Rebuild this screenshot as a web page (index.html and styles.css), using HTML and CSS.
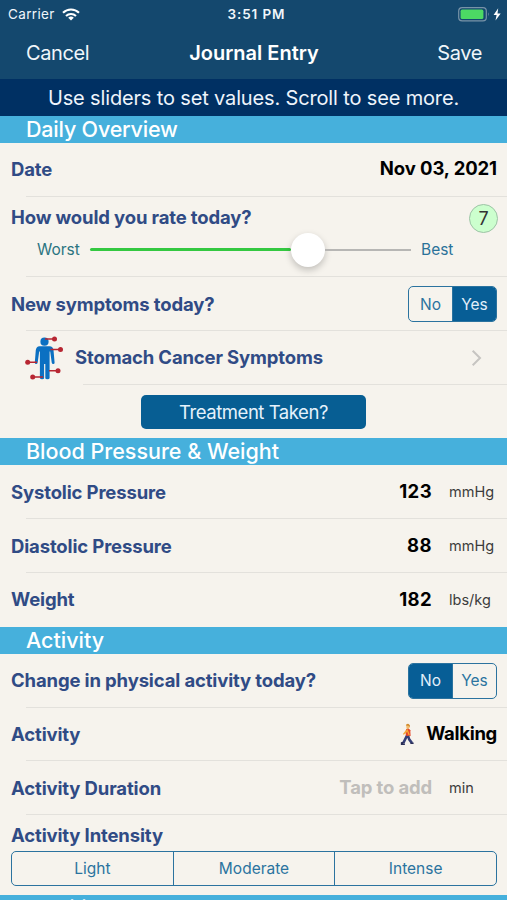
FILE: index.html
```html
<!DOCTYPE html>
<html lang="en">
<head>
<meta charset="utf-8">
<title>Journal Entry</title>
<link rel="stylesheet" href="styles.css">
</head>
<body>
<header class="top">
  <div class="status">
    <div class="carrier"><span class="t-carrier">Carrier</span>
      <svg class="wifi" viewBox="0 0 18 13" width="18" height="13"><g fill="none" stroke="#fff" stroke-width="2.1"><path d="M1 4.8a11.4 11.4 0 0 1 16 0"/><path d="M4 8a7.2 7.2 0 0 1 10 0"/></g><path d="M9 12.6 6.2 9.8a4 4 0 0 1 5.6 0z" fill="#fff"/></svg>
    </div>
    <div class="time">3:51 PM</div>
    <svg class="battery" viewBox="0 0 44 15" width="44" height="15"><rect x=".7" y=".7" width="27.6" height="13.2" rx="3.4" fill="none" stroke="#7893a8" stroke-width="1.2"/><rect x="2.6" y="2.6" width="22.8" height="9.4" rx="1.6" fill="#4cd964"/><path d="M30 5.2q1.8 2.1 0 4.2z" fill="#7893a8"/><path d="M40.2 1.2 35.6 8h3l-1.1 5.6 5.2-7.2h-3.2z" fill="#fff"/></svg>
  </div>
  <nav class="nav"><span class="t-cancel">Cancel</span><span class="title">Journal Entry</span><span class="t-save">Save</span></nav>
</header>
<div class="hint"><span>Use sliders to set values. Scroll to see more.</span></div>
<main>
  <h2 class="section daily">Daily Overview</h2>
  <div class="row line"><span class="label">Date</span><span class="value date">Nov 03, 2021</span></div>
  <div class="rate line">
    <div class="rate-head"><span class="label">How would you rate today?</span><span class="score">7</span></div>
    <div class="slider"><span class="worst">Worst</span><div class="track"><div class="fill"></div><div class="thumb"></div><div class="rest"></div></div><span class="best">Best</span></div>
  </div>
  <div class="row line"><span class="label">New symptoms today?</span><div class="seg"><span>No</span><span class="on">Yes</span></div></div>
  <div class="row line inset">
    <svg class="body" viewBox="0 0 40 46" width="40" height="46"><g fill="#0b70c2"><circle cx="19.5" cy="6.7" r="4.1"/><path d="M14.5 11.3h10q3.5 0 4 3.8l1.1 12.6q-.1 1.5-1.4 1.3-1.2 0-1.5-1.5l-1.5-11h-.6V43q0 1.2-2.2 1.2T20.3 43V29h-1.2v14q0 1.2-2 1.2T14.9 43V16.5h-.7l-1.5 11q-.3 1.5-1.6 1.5-1.3 0-1.3-1.5l1-12.4q.6-3.8 3.700-3.800z"/></g><g stroke="#b72632" stroke-width="1.5" fill="#b72632"><path d="M20 4h9M25.5 14.5h9M3 27.3h9M24 35.7h8.5M8 42h10"/><g stroke="none"><circle cx="29.5" cy="4" r="2.5"/><circle cx="35.5" cy="14.5" r="2.5"/><circle cx="2.7" cy="27.3" r="2.5"/><circle cx="33" cy="35.7" r="2.5"/><circle cx="7.7" cy="42" r="2.5"/></g></g></svg>
    <span class="label">Stomach Cancer Symptoms</span>
    <svg class="chev" viewBox="0 0 12 18" width="12" height="18"><path d="M1.7 1.7 9 9l-7.3 7.3" fill="none" stroke="#c6c4c1" stroke-width="2"/></svg>
  </div>
  <div class="action"><button class="treat">Treatment Taken?</button></div>
  <h2 class="section">Blood Pressure &amp; Weight</h2>
  <div class="row line"><span class="label">Systolic Pressure</span><span class="value num">123</span><span class="unit">mmHg</span></div>
  <div class="row line"><span class="label">Diastolic Pressure</span><span class="value num">88</span><span class="unit">mmHg</span></div>
  <div class="row"><span class="label">Weight</span><span class="value num">182</span><span class="unit">lbs/kg</span></div>
  <h2 class="section">Activity</h2>
  <div class="row line"><span class="label">Change in physical activity today?</span><div class="seg"><span class="on">No</span><span>Yes</span></div></div>
  <div class="row line"><span class="label">Activity</span>
    <svg class="walker" viewBox="0 0 16 24" width="15" height="23"><path d="M6.5 2.5Q7 .8 9 1.3q1.7.6 1.2 3l-1.2 2-2-.6z" fill="#f2bd70"/><path d="M6.200 2.500Q6.800.2 9.200.7q2 .6 1.300 3.600L9 2.700z" fill="#cf8a2e"/><path d="M6.600 6.200q3-1 4.400 1.200l.3 6.200-5 .5-.4-5z" fill="#e4482c"/><path d="m6.700 7-3.600 4.500 1 .8 4-3.500z" fill="#f3a83a"/><path d="M7.500 6.500 10 13" stroke="#f8ad35" stroke-width="1.3"/><path d="M7.300 13.500 3.500 21.200M8.600 13.500l1.200 3.700 3 4" stroke="#343e77" stroke-width="2.7" fill="none"/><path d="m3.700 20.500-2 .5v1.300h3.500M11.200 21.300h3.300" stroke="#2a2e57" stroke-width="1.6" fill="none"/></svg>
    <span class="value walk">Walking</span></div>
  <div class="row line"><span class="label">Activity Duration</span><span class="value tap">Tap to add</span><span class="unit">min</span></div>
  <div class="intensity"><span class="label">Activity Intensity</span><div class="seg wide"><span>Light</span><span>Moderate</span><span>Intense</span></div></div>
  <h2 class="section next">Nutrition &amp; Food</h2>
</main>
</body>
</html>
```
FILE: styles.css
```css
* { box-sizing: border-box; }
html, body { height: 100%; }
body { margin: 0; width: 507px; height: 900px; overflow: hidden; background: #f6f3ed; color: #000; font-family: Inter, "Liberation Sans", sans-serif; display: flex; flex-direction: column; }
span { white-space: nowrap; }
.top { height: 79px; background: #14486e; color: #f0f6fb; flex: none; }
.status { height: 28px; display: grid; grid-template-columns: 1fr auto 1fr; align-items: center; padding: 0 5px 0 8px; font-size: 13.5px; }
.carrier { display: flex; align-items: center; gap: 7px; }
.t-carrier { letter-spacing: .35px; }
.time { font-weight: 600; letter-spacing: .9px; padding-left: 3px; }
.battery { justify-self: end; }
.nav { height: 50px; display: grid; grid-template-columns: 1fr auto 1fr; align-items: center; padding: 0 25px 0 26px; font-size: 20px; }
.t-cancel, .t-save { letter-spacing: -.4px; }
.title { font-weight: 600; color: #fff; }
.t-save { justify-self: end; }
.hint { height: 37px; flex: none; background: #003063; color: #eef4fb; font-size: 20px; letter-spacing: -.15px; display: flex; align-items: center; justify-content: center; }
main { flex: none; }
.section { margin: 0; height: 27px; line-height: 27px; padding-left: 26px; background: #46b0dc; color: #fff; font-size: 21.5px; font-weight: 530; white-space: nowrap; }
.daily { letter-spacing: -.2px; }
.next { letter-spacing: -.45px; }
.row { height: 53.8px; display: flex; align-items: center; padding: 0 10px 0 11px; }
.line { background: linear-gradient(#e3e1dc, #e3e1dc) 26px 100% / 100% 1px no-repeat; }
.inset { background-position: 83px 100%; }
.label { color: #304b85; font-size: 18.5px; font-weight: 650; letter-spacing: -.14px; margin-right: auto; padding-bottom: 1px; }
.value { font-size: 18.5px; font-weight: 650; padding-bottom: 2px; }
.date { padding-bottom: 3px; letter-spacing: -.1px; }
.walk { letter-spacing: -.3px; }
.num { letter-spacing: .4px; }
.unit { width: 48px; margin-left: 17px; font-size: 14.5px; color: #3c3c3c; padding-bottom: 1px; }
.rate { height: 80.5px; padding: 7px 9px 0 11px; }
.rate-head { display: flex; align-items: center; height: 29px; }
.rate-head .label { padding-bottom: 2px; }
.score { width: 29px; height: 29px; border: 1.5px solid #9dc3a5; border-radius: 50%; background: #ccffce; display: grid; place-items: center; font-size: 18px; color: #333; }
.slider { height: 34px; display: flex; align-items: center; padding-left: 26px; color: #2b7480; font-size: 15.5px; }
.worst { width: 53px; }
.track { width: 321px; display: flex; align-items: center; }
.fill { height: 3px; width: 201px; background: #34c841; border-radius: 2px; }
.thumb { width: 34px; height: 34px; border-radius: 50%; background: #fff; box-shadow: 0 3px 7px rgba(0,0,0,.22); }
.rest { height: 2px; flex: 1; background: #b7b6b4; }
.best { margin-left: 10px; color: #2b7299; }
.seg { width: 89px; height: 36px; border: 1.5px solid #2b739f; border-radius: 5px; display: flex; overflow: hidden; color: #2b739f; font-size: 15.5px; }
.seg span { flex: 1; display: grid; place-items: center; }
.seg span + span { border-left: 1.5px solid #2b739f; }
.seg .on { background: #075e96; color: #e2effa; }
.body { margin: 0 10px 0 14px; }
.chev { margin-right: 14px; }
.action { height: 53.5px; display: flex; align-items: center; justify-content: center; }
.treat { width: 225px; height: 34px; border: 0; border-radius: 5px; background: #075e93; color: #e5f2fc; font: 18.5px Inter, sans-serif; letter-spacing: -.45px; padding: 0; }
.walker { margin-right: 11px; }
.tap { color: #c0bebb; letter-spacing: -.15px; }
.intensity { height: 80px; padding: 9px 10px 0 11px; }
.intensity .label { display: block; line-height: 22px; }
.wide { width: 486px; height: 35px; margin-top: 4px; }
```
